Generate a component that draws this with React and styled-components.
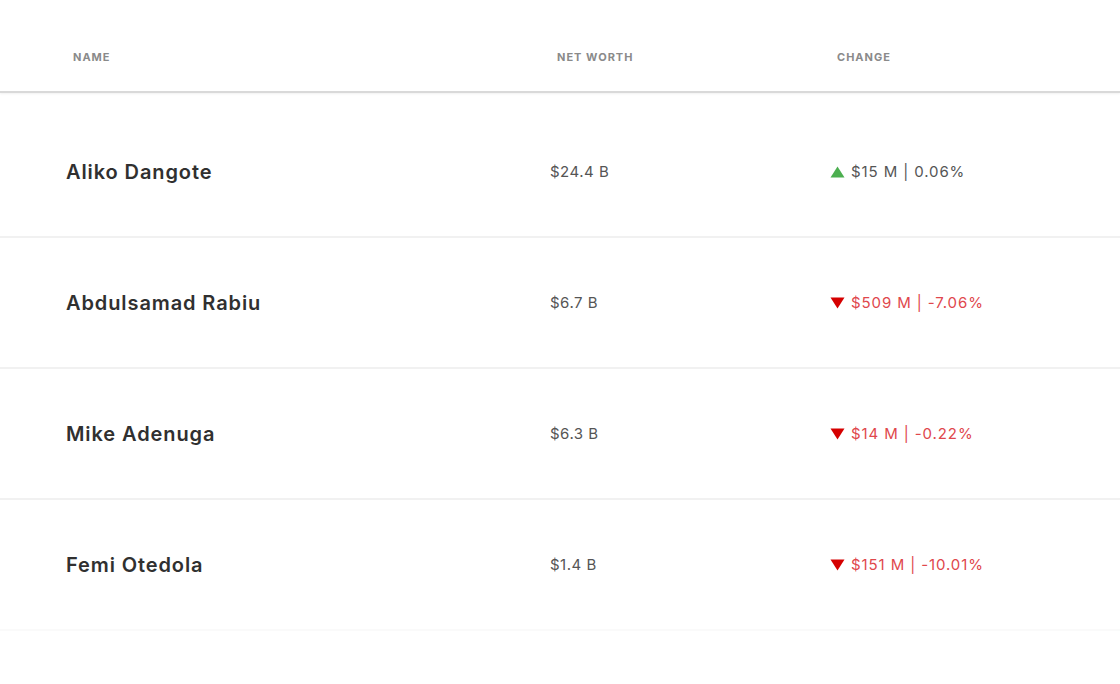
import styled, { createGlobalStyle } from "styled-components";

const GlobalStyle = createGlobalStyle`
  html, body {
    margin: 0;
    padding: 0;
    background: #ffffff;
  }
  body {
    font-family: Inter, "Open Sans", Arial, sans-serif;
    -webkit-font-smoothing: antialiased;
  }
`;

const Table = styled.div`
  width: 1120px;
  height: 684px;
  background: #ffffff;
  overflow: hidden;
`;

const columns = `
  display: grid;
  grid-template-columns: 484px 280px 1fr;
  padding-left: 66px;
`;

const HeadRow = styled.div`
  ${columns}
  height: 93px;
  box-sizing: border-box;
  align-items: center;
  padding-top: 23px;
  border-bottom: 2px solid #d9d9d9;
  box-shadow: 0 1px 2px rgba(0, 0, 0, 0.06);
`;

const HeadCell = styled.div`
  padding-left: 7px;
  font-size: 11px;
  font-weight: 700;
  letter-spacing: 1px;
  color: #8a8a8a;
  text-transform: uppercase;
`;

const Body = styled.div`
  padding-top: 14px;
`;

const Row = styled.div`
  ${columns}
  height: 131px;
  box-sizing: border-box;
  align-items: center;
  border-bottom: 2px solid ${(p) => (p.$last ? "#fafafa" : "#f1f1f1")};
`;

const Name = styled.div`
  font-size: 20px;
  font-weight: 600;
  color: #303030;
  letter-spacing: 0.9px;
`;

const Worth = styled.div`
  font-size: 15px;
  letter-spacing: 0.5px;
  color: #555555;
`;

const Change = styled.div`
  display: flex;
  align-items: center;
  gap: 6px;
  font-size: 15px;
  letter-spacing: 0.9px;
  color: ${(p) => (p.$up ? "#555555" : "#e0474c")};
`;

const Arrow = styled.svg`
  width: 15px;
  height: 12px;
  flex: none;
`;

const people = [
  { name: "Aliko Dangote", worth: "$24.4 B", change: "$15 M | 0.06%", up: true },
  { name: "Abdulsamad Rabiu", worth: "$6.7 B", change: "$509 M | -7.06%", up: false },
  { name: "Mike Adenuga", worth: "$6.3 B", change: "$14 M | -0.22%", up: false },
  { name: "Femi Otedola", worth: "$1.4 B", change: "$151 M | -10.01%", up: false },
];

function Triangle({ up }) {
  return (
    <Arrow viewBox="0 0 15 12">
      {up ? (
        <path d="M7.5 0.5 L14.5 11.5 L0.5 11.5 Z" fill="#4caf50" />
      ) : (
        <path d="M0.5 0.5 L14.5 0.5 L7.5 11.5 Z" fill="#d50000" />
      )}
    </Arrow>
  );
}

export default function App() {
  return (
    <>
      <GlobalStyle />
      <Table>
        <HeadRow>
          <HeadCell>Name</HeadCell>
          <HeadCell>Net Worth</HeadCell>
          <HeadCell>Change</HeadCell>
        </HeadRow>
        <Body>
          {people.map((p, i) => (
            <Row key={p.name} $last={i === people.length - 1}>
              <Name>{p.name}</Name>
              <Worth>{p.worth}</Worth>
              <Change $up={p.up}>
                <Triangle up={p.up} />
                {p.change}
              </Change>
            </Row>
          ))}
        </Body>
      </Table>
    </>
  );
}
